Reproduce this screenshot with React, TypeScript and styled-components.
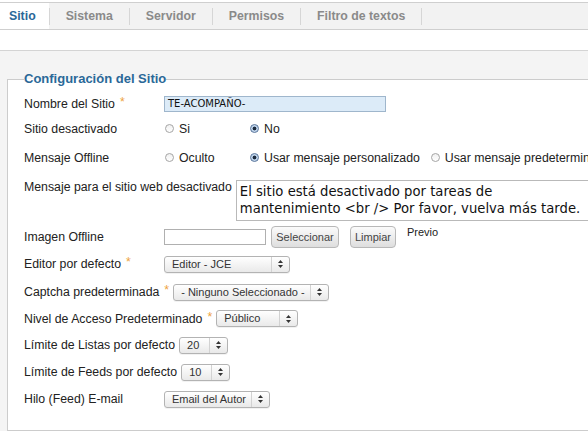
import React from 'react'
import styled, { createGlobalStyle } from 'styled-components'

const GlobalStyle = createGlobalStyle`
  html, body {
    margin: 0;
    padding: 0;
    background: #ffffff;
    overflow: hidden;
  }
  body {
    font-family: "Liberation Sans", Arial, sans-serif;
    font-size: 12px;
    color: #222;
  }
`

const Page = styled.div`
  width: 760px;
  padding-top: 2px;
`

const TabBar = styled.div`
  display: flex;
  align-items: stretch;
  height: 26px;
  background: #f2f2f2;
  border-top: 1px solid #cfcfcf;
  border-bottom: 1px solid #cfcfcf;
`

const Tab = styled.div<{ $active?: boolean; $first?: boolean }>`
  display: flex;
  align-items: center;
  padding: ${(p) => (p.$first ? '0 13px 0 9px' : '0 16px')};
  font-weight: bold;
  font-size: 12.3px;
  color: ${(p) => (p.$active ? '#2a6898' : '#8a8a8a')};
  background: ${(p) => (p.$active ? '#ffffff' : 'transparent')};
`

const TabSep = styled.span`
  align-self: center;
  width: 1px;
  height: 17px;
  background: #d6d6d6;
`

const Spacer = styled.div`
  height: 20px;
`

const Content = styled.div`
  background: #f4f4f4;
  border-top: 1px solid #d4d4d4;
  padding: 20px 0 2px 7px;
`

const Fieldset = styled.fieldset`
  margin: 0;
  padding: 4px 0 17px 16px;
  background: #ffffff;
  border: 1px solid #cccccc;
  border-right: none;
`

const Legend = styled.legend`
  padding: 0;
  font-size: 13px;
  font-weight: bold;
  color: #2a6898;
  line-height: 16px;
`

const Row = styled.div<{ $h: number; $top?: boolean }>`
  display: flex;
  align-items: ${(p) => (p.$top ? 'flex-start' : 'center')};
  height: ${(p) => p.$h}px;
  padding-top: ${(p) => (p.$top ? 6 : 0)}px;
  box-sizing: border-box;
`

const Label = styled.label<{ $top?: boolean }>`
  flex-shrink: 0;
  min-width: 136px;
  margin-right: 4px;
  font-size: 12.3px;
  color: #222;
  white-space: nowrap;
  line-height: ${(p) => (p.$top ? '14px' : 'normal')};
`

const Star = styled.span`
  color: #eea23e;
  margin-left: 5px;
  position: relative;
  top: -2px;
`

const TextInput = styled.div<{ $w: number; $blue?: boolean }>`
  box-sizing: border-box;
  width: ${(p) => p.$w}px;
  height: 16px;
  padding: 0 3px;
  border: 1px solid ${(p) => (p.$blue ? '#9fb6cc' : '#b0b0b0')};
  background: ${(p) => (p.$blue ? '#dcebf8' : '#ffffff')};
  font-family: "DejaVu Sans", sans-serif;
  font-size: 10px;
  line-height: 14px;
  color: #111;
`

const RadioGroup = styled.div`
  display: flex;
  align-items: center;
`

const RadioOption = styled.span`
  display: flex;
  align-items: center;
  min-width: 75px;
  margin-right: 10px;
  white-space: nowrap;
  font-size: 12.3px;
`

const RadioDot = styled.span<{ $on?: boolean }>`
  box-sizing: border-box;
  width: 9px;
  height: 9px;
  margin: 0 5px 0 1px;
  border-radius: 50%;
  border: 1px solid ${(p) => (p.$on ? '#56739a' : '#a5a5a5')};
  background: ${(p) =>
    p.$on
      ? 'radial-gradient(circle, #1c2a3c 0 1.6px, #b7cde6 2.2px, #dbe8f6 100%)'
      : 'linear-gradient(#f0f0f0, #ffffff)'};
`

const TextArea = styled.div`
  box-sizing: border-box;
  width: 420px;
  height: 41px;
  padding: 2px 3px;
  border: 1px solid #b9b9b9;
  font-family: "DejaVu Sans", sans-serif;
  font-size: 13.2px;
  line-height: 17px;
  color: #111;
  white-space: nowrap;
`

const Button = styled.button<{ $w: number }>`
  box-sizing: border-box;
  width: ${(p) => p.$w}px;
  height: 22px;
  margin-left: ${(p) => (p.$w > 60 ? 5 : 11)}px;
  padding: 0;
  border: 1px solid #b8b8b8;
  border-radius: 4px;
  background: linear-gradient(#fbfbfb, #dedede);
  font-family: "Liberation Sans", Arial, sans-serif;
  font-size: 11px;
  color: #444;
`

const Previo = styled.span`
  align-self: flex-start;
  margin: 3px 0 0 11px;
  font-size: 11px;
  color: #222;
`

const SelectBox = styled.div<{ $w: number }>`
  box-sizing: border-box;
  display: flex;
  align-items: stretch;
  width: ${(p) => p.$w}px;
  height: 17px;
  border: 1px solid #b3b3b3;
  border-radius: 3px;
  background: linear-gradient(#ffffff, #e9e9e9);
  box-shadow: 0 1px 0 rgba(0, 0, 0, 0.05);
`

const SelectText = styled.span`
  flex: 1;
  padding-left: 7px;
  font-size: 11px;
  line-height: 15px;
  color: #333;
  white-space: nowrap;
  overflow: hidden;
`

const SelectArrow = styled.span`
  display: flex;
  align-items: center;
  justify-content: center;
  width: 17px;
  border-left: 1px solid #d2d2d2;
`

const Arrows = () => (
  <svg width="5" height="8" viewBox="0 0 5 8">
    <path d="M2.5 0 L5 3 L0 3 Z" fill="#333" />
    <path d="M2.5 8 L5 5 L0 5 Z" fill="#333" />
  </svg>
)

const Select: React.FC<{ w: number; value: string }> = ({ w, value }) => (
  <SelectBox $w={w}>
    <SelectText>{value}</SelectText>
    <SelectArrow>
      <Arrows />
    </SelectArrow>
  </SelectBox>
)

const tabs = ['Sitio', 'Sistema', 'Servidor', 'Permisos', 'Filtro de textos']

const App: React.FC = () => {
  return (
    <Page>
      <GlobalStyle />
      <TabBar>
        {tabs.map((t, i) => (
          <React.Fragment key={t}>
            <Tab $active={i === 0} $first={i === 0}>
              {t}
            </Tab>
            <TabSep />
          </React.Fragment>
        ))}
      </TabBar>
      <Spacer />
      <Content>
        <Fieldset>
          <Legend>Configuración del Sitio</Legend>
          <Row $h={25}>
            <Label>
              Nombre del Sitio<Star>*</Star>
            </Label>
            <TextInput $w={222} $blue>
              TE-ACOMPAÑO-
            </TextInput>
          </Row>
          <Row $h={25}>
            <Label>Sitio desactivado</Label>
            <RadioGroup>
              <RadioOption>
                <RadioDot />
                Si
              </RadioOption>
              <RadioOption>
                <RadioDot $on />
                No
              </RadioOption>
            </RadioGroup>
          </Row>
          <Row $h={33}>
            <Label>Mensaje Offline</Label>
            <RadioGroup>
              <RadioOption>
                <RadioDot />
                Oculto
              </RadioOption>
              <RadioOption>
                <RadioDot $on />
                Usar mensaje personalizado
              </RadioOption>
              <RadioOption>
                <RadioDot />
                Usar mensaje predeterminado
              </RadioOption>
            </RadioGroup>
          </Row>
          <Row $h={49} $top>
            <Label $top>Mensaje para el sitio web desactivado</Label>
            <TextArea>
              El sitio está desactivado por tareas de
              <br />
              mantenimiento &lt;br /&gt; Por favor, vuelva más tarde.
            </TextArea>
          </Row>
          <Row $h={27}>
            <Label>Imagen Offline</Label>
            <TextInput $w={102} />
            <Button $w={68}>Seleccionar</Button>
            <Button $w={46}>Limpiar</Button>
            <Previo>Previo</Previo>
          </Row>
          <Row $h={28}>
            <Label>
              Editor por defecto<Star>*</Star>
            </Label>
            <Select w={126} value="Editor - JCE" />
          </Row>
          <Row $h={28}>
            <Label>
              Captcha predeterminada<Star>*</Star>
            </Label>
            <Select w={156} value="- Ninguno Seleccionado -" />
          </Row>
          <Row $h={25}>
            <Label>
              Nivel de Acceso Predeterminado<Star>*</Star>
            </Label>
            <Select w={82} value="Público" />
          </Row>
          <Row $h={28}>
            <Label>Límite de Listas por defecto</Label>
            <Select w={49} value="20" />
          </Row>
          <Row $h={26}>
            <Label>Límite de Feeds por defecto</Label>
            <Select w={49} value="10" />
          </Row>
          <Row $h={28}>
            <Label>Hilo (Feed) E-mail</Label>
            <Select w={106} value="Email del Autor" />
          </Row>
        </Fieldset>
      </Content>
    </Page>
  )
}

export default App
